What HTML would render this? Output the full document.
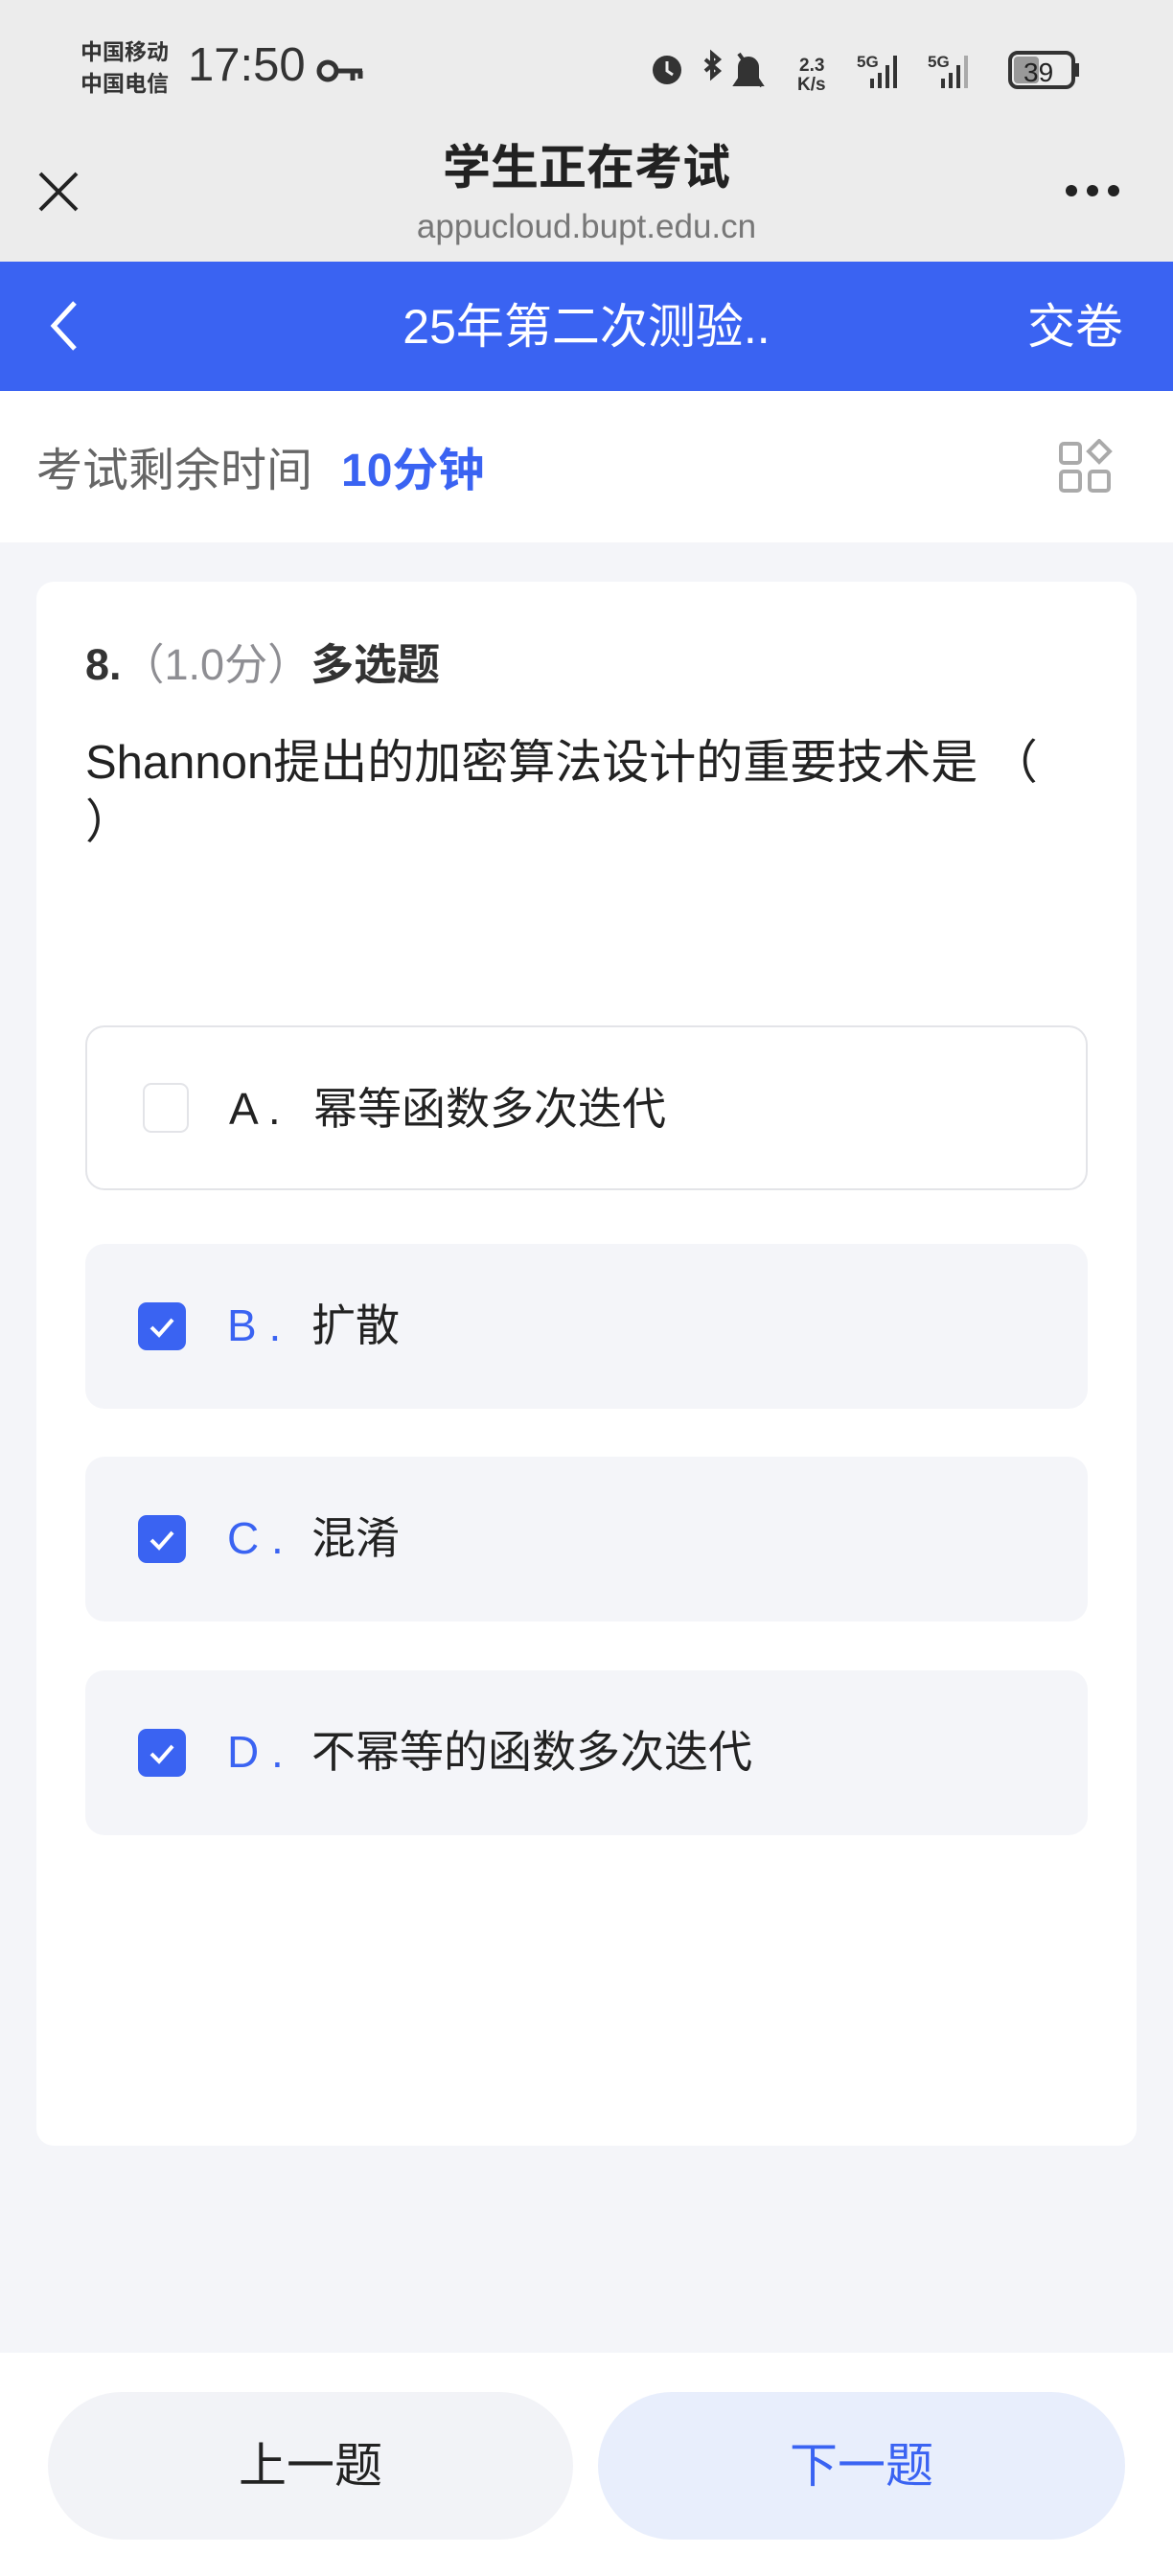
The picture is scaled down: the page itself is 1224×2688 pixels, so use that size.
<!DOCTYPE html>
<html><head><meta charset="utf-8"><style>
*{margin:0;padding:0;box-sizing:border-box}
body{width:1224px;height:2688px;background:#f4f5f9;font-family:"Liberation Sans","Noto Sans CJK SC",sans-serif;position:relative;overflow:hidden;color:#222}
.a{position:absolute;white-space:nowrap}
.top{position:absolute;left:0;top:0;width:1224px;height:273px;background:#ececec}
.blue{position:absolute;left:0;top:273px;width:1224px;height:135px;background:#3a63f2}
.timer{position:absolute;left:0;top:408px;width:1224px;height:158px;background:#fff}
.card{position:absolute;left:38px;top:607px;width:1148px;height:1632px;background:#fff;border-radius:18px}
.opt{position:absolute;left:89px;width:1046px;height:172px;border-radius:20px;background:#f4f5f9}
.opt.a0{background:#fff;border:2px solid #e3e4e8}
.cb{position:absolute;left:55px;top:61px;width:50px;height:50px;border-radius:9px;background:#3a63f2}
.opt.a0 .cb{background:#fff;border:2px solid #e3e4e8;top:58px;left:58px;width:48px;height:52px}
.lab{position:absolute;left:148px;top:55px;font-size:46px;color:#3a63f2;line-height:60px}
.txt{position:absolute;left:236px;top:55px;font-size:46px;color:#222;line-height:60px}
.bottom{position:absolute;left:0;top:2455px;width:1224px;height:233px;background:#fff}
.btn{position:absolute;top:2496px;height:154px;border-radius:77px;font-size:50px;text-align:center;line-height:154px}
</style></head><body>
<div class="top"></div>
<div class="a" style="left:84px;top:38px;font-size:23px;line-height:33px;font-weight:bold;color:#333">中国移动<br>中国电信</div>
<div class="a" style="left:196px;top:40px;font-size:49px;color:#333">17:50</div>
<svg class="a" style="left:330px;top:60px" width="52" height="30"><circle cx="12" cy="14" r="9" fill="none" stroke="#333" stroke-width="5"/><path d="M21 14H48M38 14v10M46 14v8" stroke="#333" stroke-width="5" fill="none"/></svg>
<svg class="a" style="left:676px;top:50px" width="460" height="50">
<circle cx="20" cy="23" r="15" fill="#333"/><path d="M20 14v10l6 4" stroke="#ececec" stroke-width="3" fill="none"/>
<path d="M60 12l14 12-7 6V6l7 6-14 12" stroke="#333" stroke-width="4" fill="none"/>
<path d="M92 38h26l-4-6V20a9 9 0 0 0-18 0v12z M95 6l24 34" stroke="#333" stroke-width="4" fill="#333"/>
<text x="158" y="24" font-size="19" font-weight="bold" fill="#333" font-family="Liberation Sans">2.3</text><text x="156" y="44" font-size="19" font-weight="bold" fill="#333" font-family="Liberation Sans">K/s</text>
<text x="218" y="20" font-size="17" font-weight="bold" fill="#333" font-family="Liberation Sans">5G</text>
<rect x="232" y="32" width="4" height="10" fill="#333"/><rect x="240" y="26" width="4" height="16" fill="#333"/><rect x="248" y="18" width="4" height="24" fill="#333"/><rect x="256" y="8" width="4" height="34" fill="#333"/>
<text x="292" y="20" font-size="17" font-weight="bold" fill="#333" font-family="Liberation Sans">5G</text>
<rect x="306" y="32" width="4" height="10" fill="#333"/><rect x="314" y="26" width="4" height="16" fill="#333"/><rect x="322" y="18" width="4" height="24" fill="#333"/><rect x="330" y="8" width="4" height="34" fill="#aaa"/>
<rect x="378" y="5" width="66" height="36" rx="8" fill="none" stroke="#333" stroke-width="4"/><rect x="382" y="9" width="26" height="28" rx="4" fill="#999"/><rect x="446" y="16" width="4" height="14" fill="#333"/>
<text x="392" y="35" font-size="28" fill="#222" font-family="Liberation Sans">39</text></svg>
<svg class="a" style="left:38px;top:178px" width="46" height="44"><path d="M4 3l38 38M42 3L4 41" stroke="#222" stroke-width="4"/></svg>
<div class="a" style="left:0;width:1224px;text-align:center;top:135px;font-size:50px;font-weight:bold;color:#222">学生正在考试</div>
<div class="a" style="left:0;width:1224px;text-align:center;top:217px;font-size:35px;color:#777">appucloud.bupt.edu.cn</div>
<svg class="a" style="left:1110px;top:191px" width="60" height="16"><circle cx="8" cy="8" r="6" fill="#222"/><circle cx="30" cy="8" r="6" fill="#222"/><circle cx="52" cy="8" r="6" fill="#222"/></svg>
<div class="blue"></div>
<svg class="a" style="left:48px;top:312px" width="36" height="56"><path d="M30 4L8 28l22 24" stroke="#fff" stroke-width="5" fill="none"/></svg>
<div class="a" style="left:0;width:1224px;text-align:center;top:301px;font-size:50px;color:#fff">25年第二次测验..</div>
<div class="a" style="left:1072px;top:301px;font-size:50px;color:#fff">交卷</div>
<div class="timer"></div>
<div class="a" style="left:38px;top:451px;font-size:48px;color:#666">考试剩余时间</div>
<div class="a" style="left:356px;top:451px;font-size:48px;color:#3a63f2;font-weight:bold">10分钟</div>
<svg class="a" style="left:1104px;top:458px" width="60" height="58"><rect x="3" y="5" width="20" height="20" rx="3" fill="none" stroke="#aaa" stroke-width="4"/><rect x="3" y="34" width="20" height="20" rx="3" fill="none" stroke="#aaa" stroke-width="4"/><rect x="33" y="34" width="20" height="20" rx="3" fill="none" stroke="#aaa" stroke-width="4"/><path d="M43 2l11 11-11 11-11-11z" fill="none" stroke="#aaa" stroke-width="4"/></svg>
<div class="card"></div>
<div class="a" style="left:89px;top:657px;font-size:45px;font-weight:bold;color:#333">8.<span style="color:#8e8e93;font-weight:normal">（1.0分）</span>多选题</div>
<div class="a" style="left:89px;top:765px;font-size:49px;color:#222;line-height:62px">Shannon提出的加密算法设计的重要技术是 （<br>）</div>
<div class="opt a0" style="top:1070px"><div class="cb"></div><div class="lab" style="color:#222">A .</div><div class="txt">幂等函数多次迭代</div></div>
<div class="opt" style="top:1298px"><div class="cb"><svg width="50" height="50"><path d="M14 26l8 8 14-16" stroke="#fff" stroke-width="4" fill="none"/></svg></div><div class="lab">B .</div><div class="txt">扩散</div></div>
<div class="opt" style="top:1520px"><div class="cb"><svg width="50" height="50"><path d="M14 26l8 8 14-16" stroke="#fff" stroke-width="4" fill="none"/></svg></div><div class="lab">C .</div><div class="txt">混淆</div></div>
<div class="opt" style="top:1743px"><div class="cb"><svg width="50" height="50"><path d="M14 26l8 8 14-16" stroke="#fff" stroke-width="4" fill="none"/></svg></div><div class="lab">D .</div><div class="txt">不幂等的函数多次迭代</div></div>
<div class="bottom"></div>
<div class="btn" style="left:50px;width:548px;background:#f2f3f7;color:#222">上一题</div>
<div class="btn" style="left:624px;width:550px;background:#e8eefc;color:#3a63f2">下一题</div>
</body></html>
